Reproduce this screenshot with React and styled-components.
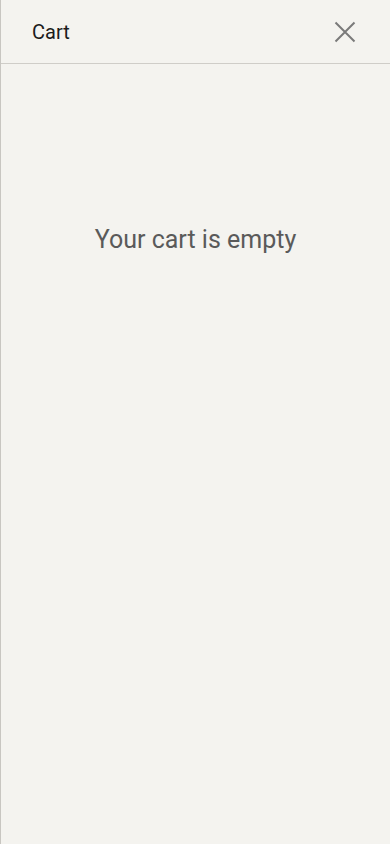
import React from "react";
import styled, { createGlobalStyle } from "styled-components";

const GlobalStyle = createGlobalStyle`
  html, body {
    margin: 0;
    padding: 0;
    background: #f4f3ef;
  }
  * { box-sizing: border-box; }
`;

const Drawer = styled.aside`
  width: 390px;
  height: 844px;
  background-color: #f4f3ef;
  border-left: 1px solid #c8c6c1;
  display: flex;
  flex-direction: column;
  font-family: Roboto, "Liberation Sans", sans-serif;
`;

const Header = styled.header`
  height: 64px;
  border-bottom: 1px solid #cfcdc8;
  display: flex;
  align-items: center;
  justify-content: space-between;
  padding: 0 29px 0 31px;
`;

const Title = styled.h2`
  margin: 0;
  font-size: 20px;
  font-weight: 400;
  color: #1c1c1c;
`;

const CloseButton = styled.button`
  width: 32px;
  height: 32px;
  padding: 0;
  border: none;
  background: none;
  display: flex;
  align-items: center;
  justify-content: center;
  cursor: pointer;
`;

const Body = styled.div`
  flex: 1;
  display: flex;
  flex-direction: column;
  align-items: center;
  padding-top: 161px;
`;

const EmptyText = styled.p`
  margin: 0;
  font-size: 25px;
  font-weight: 400;
  color: #5a5a5a;
`;

const App = () => {
  return (
    <>
      <GlobalStyle />
      <Drawer>
        <Header>
          <Title>Cart</Title>
          <CloseButton aria-label="Close">
            <svg width="22" height="22" viewBox="0 0 22 22">
              <path d="M1.5 1.5 L20.5 20.5 M20.5 1.5 L1.5 20.5" stroke="#7a7a7a" strokeWidth="2" fill="none" />
            </svg>
          </CloseButton>
        </Header>
        <Body>
          <EmptyText>Your cart is empty</EmptyText>
        </Body>
      </Drawer>
    </>
  );
};

export default App;
